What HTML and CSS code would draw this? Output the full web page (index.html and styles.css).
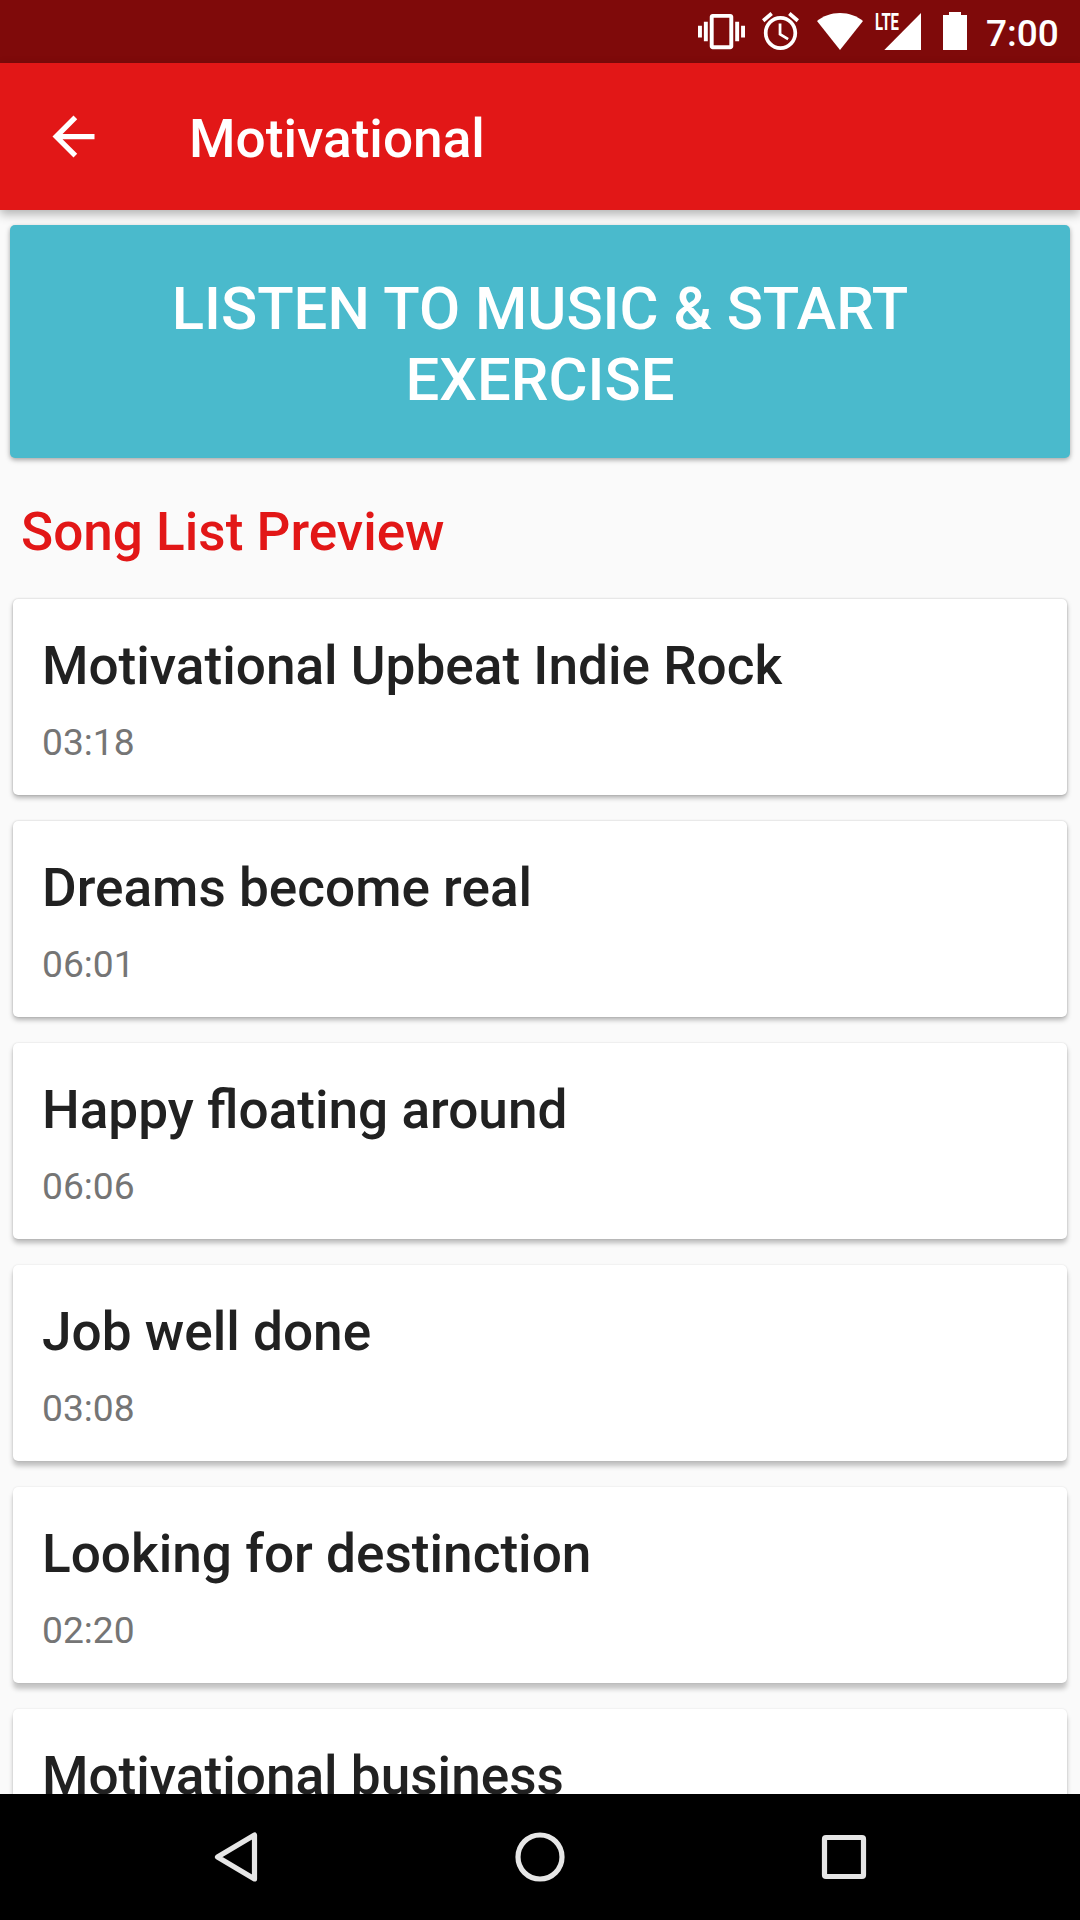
FILE: index.html
```html
<!DOCTYPE html>
<html lang="en">
<head>
    <meta charset="UTF-8">
    <meta name="viewport" content="width=device-width, initial-scale=1.0">
    <title>Motivational</title>
    <link rel="stylesheet" href="styles.css">
</head>
<body>
    <!-- Status bar -->
    <div class="status-bar">
        <svg class="icon-vibrate" viewBox="0 0 24 24"><path d="M0 15h2V9H0v6zm3 2h2V7H3v10zm19-8v6h2V9h-2zm-3 8h2V7h-2v10zM16.5 3h-9C6.67 3 6 3.67 6 4.5v15c0 .83.67 1.5 1.5 1.5h9c.83 0 1.5-.67 1.5-1.5v-15c0-.83-.67-1.5-1.5-1.5zM16 19H8V5h8v14z"/></svg>
        <svg class="icon-alarm" viewBox="2 1.86 20 20.14" preserveAspectRatio="none"><path d="M22 5.72l-4.6-3.86-1.29 1.53 4.6 3.86L22 5.72zM7.88 3.39L6.6 1.86 2 5.71l1.29 1.53 4.59-3.85zM12.5 8H11v6l4.75 2.85.75-1.23-4-2.37V8zM12 4c-4.97 0-9 4.03-9 9s4.02 9 9 9c4.97 0 9-4.03 9-9s-4.03-9-9-9zm0 16c-3.87 0-7-3.13-7-7s3.13-7 7-7 7 3.13 7 7-3.13 7-7 7z"/></svg>
        <svg class="icon-wifi" viewBox="0 0 46 37"><path d="M23 37L0 8C6 3.2 14 0 23 0s17 3.2 23 8z"/></svg>
        <svg class="icon-signal" viewBox="0 0 46 37">
            <path d="M46 0v37H9.3z"/>
            <text x="0" y="17" textLength="24" lengthAdjust="spacingAndGlyphs">LTE</text>
        </svg>
        <svg class="icon-battery" viewBox="0 0 24 38"><path d="M6 0h12v3h6v35H0V3h6z"/></svg>
        <span class="clock">7:00</span>
    </div>

    <!-- Toolbar -->
    <div class="toolbar">
        <svg class="back" viewBox="0 0 24 24"><path d="M20 11H7.83l5.59-5.59L12 4l-8 8 8 8 1.41-1.41L7.83 13H20v-2z"/></svg>
        <h1>Motivational</h1>
    </div>

    <div class="content">
        <button class="start-button">Listen to music &amp; start exercise</button>
        <h2>Song List Preview</h2>

        <!-- Songs -->
        <div class="song-list">
            <div class="song-card shadow-1">
                <h3>Motivational Upbeat Indie Rock</h3>
                <p>03:18</p>
            </div>
            <div class="song-card shadow-2">
                <h3>Dreams become real</h3>
                <p>06:01</p>
            </div>
            <div class="song-card shadow-3">
                <h3>Happy floating around</h3>
                <p>06:06</p>
            </div>
            <div class="song-card shadow-4">
                <h3>Job well done</h3>
                <p>03:08</p>
            </div>
            <div class="song-card shadow-5">
                <h3>Looking for destinction</h3>
                <p>02:20</p>
            </div>
            <div class="song-card shadow-5">
                <h3>Motivational business</h3>
            </div>
        </div>
    </div>

    <!-- Navigation bar -->
    <div class="nav-bar">
        <svg viewBox="0 0 60 60"><path d="M48.5 8v44L11.5 30z"/></svg>
        <svg viewBox="0 0 60 60"><circle cx="30" cy="30" r="22"/></svg>
        <svg viewBox="0 0 60 60"><rect x="10.5" y="10.5" width="39" height="39" rx="1.5"/></svg>
    </div>
</body>
</html>
```

FILE: styles.css
```css
body {
    margin: 0;
    width: 1080px;
    height: 1920px;
    display: flex;
    flex-direction: column;
    overflow: hidden;
    font-family: Roboto, sans-serif;
    background-color: #fafafa;
}

h1, h2, h3, p {
    margin: 0;
    font-weight: 500;
    white-space: nowrap;
}

svg {
    display: block;
    flex: none;
}

/* Status bar */
.status-bar {
    height: 63px;
    flex: none;
    display: flex;
    align-items: flex-start;
    box-sizing: border-box;
    padding-left: 698px;
    background-color: #7f0a0a;
    color: white;
}

.status-bar svg {
    fill: white;
}

.icon-vibrate {
    width: 47px;
    height: 47px;
    margin-top: 8px;
}

.icon-alarm {
    width: 37px;
    height: 38px;
    margin: 12px 0 0 17px;
}

.icon-wifi {
    width: 46px;
    height: 37px;
    margin: 13px 0 0 18px;
}

.icon-signal {
    width: 46px;
    height: 37px;
    margin: 13px 0 0 12px;
    overflow: visible;
    font-size: 23px;
    font-weight: 700;
}

.icon-battery {
    width: 24px;
    height: 38px;
    margin: 12px 0 0 22px;
}

.clock {
    margin: 12px 0 0 19px;
    font-size: 37px;
    font-weight: 500;
    line-height: 44px;
}

/* Toolbar */
.toolbar {
    height: 147px;
    flex: none;
    display: flex;
    align-items: center;
    box-sizing: border-box;
    padding-left: 42px;
    background-color: #e21717;
    color: white;
    box-shadow: 0 4px 10px rgba(0, 0, 0, 0.3);
    z-index: 1;
}

.back {
    width: 63px;
    height: 63px;
    fill: white;
}

.toolbar h1 {
    margin: 5px 0 0 84px;
    font-size: 53.2px;
    line-height: 62px;
}

/* Content */
.content {
    flex: 1;
    min-height: 0;
    overflow: hidden;
    display: flex;
    flex-direction: column;
}

.start-button {
    height: 233px;
    flex: none;
    margin: 15px 10px 0;
    padding: 6px 120px 0;
    border: none;
    border-radius: 5px;
    background-color: #4abacc;
    color: white;
    font-family: inherit;
    font-size: 59.8px;
    font-weight: 500;
    line-height: 71px;
    text-transform: uppercase;
    box-shadow: 0 2px 5px rgba(0, 0, 0, 0.35);
}

.content h2 {
    margin: 43px 0 0 21px;
    font-size: 53.1px;
    line-height: 62px;
    color: #e21717;
}

.song-list {
    display: flex;
    flex-direction: column;
    gap: 26px;
    margin: 36px 13px 0;
}

.song-card {
    height: 196px;
    flex: none;
    box-sizing: border-box;
    padding: 36px 29px 0;
    border-radius: 5px;
    background-color: white;
}

.song-card h3 {
    font-size: 53.15px;
    line-height: 62px;
    color: #212121;
}

.song-card p {
    margin-top: 23px;
    font-size: 37.2px;
    font-weight: 400;
    line-height: 44px;
    color: #757575;
}

/* The shadow drops lower for cards further down the screen */
.shadow-1 {
    box-shadow: 0 0 2px rgba(0, 0, 0, 0.22), 0 3px 5px rgba(0, 0, 0, 0.28);
}

.shadow-2 {
    box-shadow: 0 0 2px rgba(0, 0, 0, 0.18), 0 3px 5px rgba(0, 0, 0, 0.28);
}

.shadow-3 {
    box-shadow: 0 0 2px rgba(0, 0, 0, 0.14), 0 4px 5px rgba(0, 0, 0, 0.26);
}

.shadow-4 {
    box-shadow: 0 0 2px rgba(0, 0, 0, 0.12), 0 5px 5px rgba(0, 0, 0, 0.24);
}

.shadow-5 {
    box-shadow: 0 0 2px rgba(0, 0, 0, 0.12), 0 6px 5px rgba(0, 0, 0, 0.22);
}

/* Navigation bar */
.nav-bar {
    height: 126px;
    flex: none;
    display: flex;
    justify-content: center;
    align-items: center;
    gap: 244px;
    background-color: black;
}

.nav-bar svg {
    width: 60px;
    height: 60px;
    fill: none;
    stroke: #e6e6e6;
    stroke-width: 5.2px;
    stroke-linejoin: round;
}
```
